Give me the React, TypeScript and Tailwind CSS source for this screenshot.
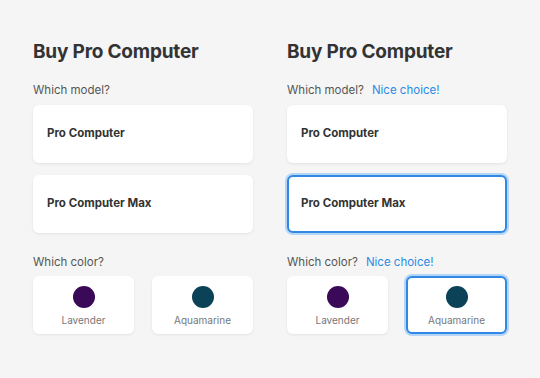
import React from 'react';

const models = ['Pro Computer', 'Pro Computer Max'];
const colors = [
    { name: 'Lavender', hex: '#3a0a58' },
    { name: 'Aquamarine', hex: '#0c4257' },
];

type PanelProps = { pickedModel?: number; pickedColor?: number };

const Panel: React.FC<PanelProps> = ({ pickedModel, pickedColor }) => {
    const chosen = pickedModel !== undefined;
    return (
        <div className="w-[220px]">
            <h1 className="text-[19px] leading-6 font-bold text-[#333] tracking-[-0.2px]">Buy Pro Computer</h1>

            <div className="mt-[18px] flex items-center gap-[8px] text-[11.5px] leading-4">
                <span className="text-[#555]">Which model?</span>
                {chosen && <span className="text-[#2b8be6]">Nice choice!</span>}
            </div>

            <div className="mt-[7px] flex flex-col gap-[12px]">
                {models.map((m, i) => (
                    <div
                        key={m}
                        className={
                            i === pickedModel
                                ? 'h-[58px] rounded-[6px] bg-white flex items-center px-[12px] border-2 border-[#2f87e6] ring-2 ring-[#b5d5f7]'
                                : 'h-[58px] rounded-[6px] bg-white flex items-center px-[14px] shadow-[0_1px_3px_rgba(0,0,0,0.08)]'
                        }
                    >
                        <span className="text-[11.5px] font-bold text-[#333]">{m}</span>
                    </div>
                ))}
            </div>

            <div className="mt-[21px] flex items-center gap-[8px] text-[11.5px] leading-4">
                <span className="text-[#555]">Which color?</span>
                {pickedColor !== undefined && <span className="text-[#2b8be6]">Nice choice!</span>}
            </div>

            <div className="mt-[6px] grid grid-cols-2 gap-[18px]">
                {colors.map((c, i) => (
                    <div
                        key={c.name}
                        className={
                            i === pickedColor
                                ? 'h-[58px] rounded-[6px] bg-white flex flex-col items-center pt-[8px] border-2 border-[#2f87e6] ring-2 ring-[#b5d5f7]'
                                : 'h-[58px] rounded-[6px] bg-white flex flex-col items-center pt-[10px] shadow-[0_1px_3px_rgba(0,0,0,0.08)]'
                        }
                    >
                        <div className="w-[22px] h-[22px] rounded-full" style={{ backgroundColor: c.hex }} />
                        <span className="mt-[6px] text-[10px] leading-3 text-[#777]">{c.name}</span>
                    </div>
                ))}
            </div>
        </div>
    );
};

const App: React.FC = () => {
    return (
        <div
            className="w-[540px] h-[378px] bg-[#f5f5f5] flex gap-[34px] pl-[33px] pt-[40px]"
            style={{ fontFamily: 'Inter, "Noto Sans", sans-serif' }}
        >
            <Panel />
            <Panel pickedModel={1} pickedColor={1} />
        </div>
    );
};

export default App;
